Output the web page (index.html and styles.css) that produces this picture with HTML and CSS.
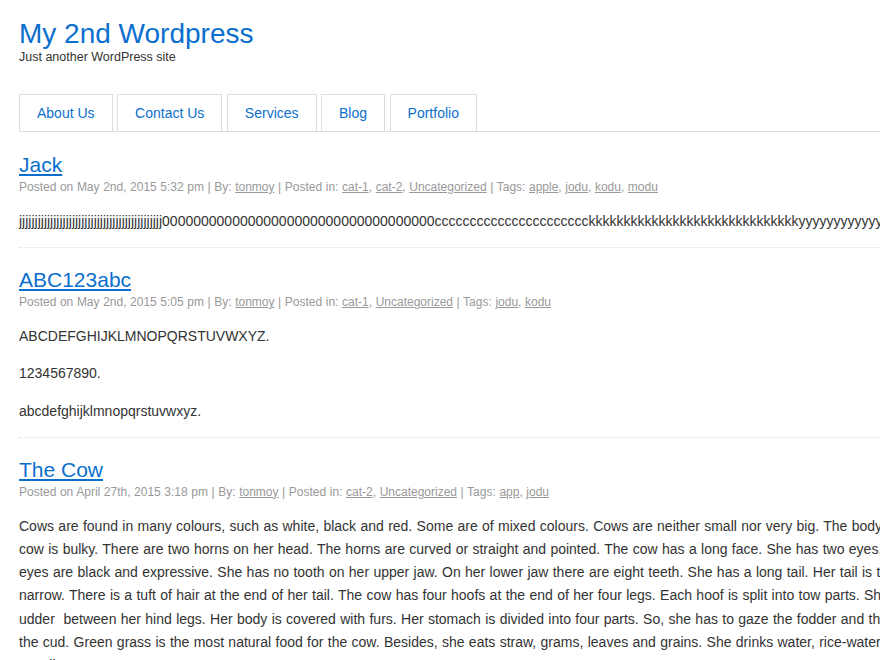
FILE: index.html
```html
<!DOCTYPE html>
<html lang="en">
<head>
<meta charset="utf-8">
<title>My 2nd Wordpress</title>
<link rel="stylesheet" href="styles.css">
</head>
<body>
<div class="site">
  <header class="site-header">
    <h1 class="site-title"><a href="#">My 2nd Wordpress</a></h1>
    <p class="site-description">Just another WordPress site</p>
  </header>
  <nav class="main-nav">
    <ul class="menu">
      <li><a href="#">About Us</a></li>
      <li><a href="#">Contact Us</a></li>
      <li><a href="#">Services</a></li>
      <li><a href="#">Blog</a></li>
      <li><a href="#">Portfolio</a></li>
    </ul>
  </nav>
  <main class="content">
    <article class="post">
      <h2 class="post-title"><a href="#">Jack</a></h2>
      <div class="post-meta">Posted on May 2nd, 2015 5:32 pm | By: <a href="#">tonmoy</a> | Posted in: <a href="#">cat-1</a>, <a href="#">cat-2</a>, <a href="#">Uncategorized</a> | Tags: <a href="#">apple</a>, <a href="#">jodu</a>, <a href="#">kodu</a>, <a href="#">modu</a></div>
      <div class="post-body">
        <p>jjjjjjjjjjjjjjjjjjjjjjjjjjjjjjjjjjjjjjjjjjjjjj00000000000000000000000000000000000cccccccccccccccccccccckkkkkkkkkkkkkkkkkkkkkkkkkkkkkkyyyyyyyyyyyyyyyyyyyyyyyyy</p>
      </div>
    </article>
    <article class="post">
      <h2 class="post-title"><a href="#">ABC123abc</a></h2>
      <div class="post-meta">Posted on May 2nd, 2015 5:05 pm | By: <a href="#">tonmoy</a> | Posted in: <a href="#">cat-1</a>, <a href="#">Uncategorized</a> | Tags: <a href="#">jodu</a>, <a href="#">kodu</a></div>
      <div class="post-body">
        <p>ABCDEFGHIJKLMNOPQRSTUVWXYZ.</p>
        <p>1234567890.</p>
        <p>abcdefghijklmnopqrstuvwxyz.</p>
      </div>
    </article>
    <article class="post">
      <h2 class="post-title"><a href="#">The Cow</a></h2>
      <div class="post-meta">Posted on April 27th, 2015 3:18 pm | By: <a href="#">tonmoy</a> | Posted in: <a href="#">cat-2</a>, <a href="#">Uncategorized</a> | Tags: <a href="#">app</a>, <a href="#">jodu</a></div>
      <div class="post-body">
        <p>Cows are found in many colours, such as white, black and red. Some are of mixed colours. Cows are neither small nor very big. The body of a cow is bulky. There are two horns on her head. The horns are curved or straight and pointed. The cow has a long face. She has two eyes. The eyes are black and expressive. She has no tooth on her upper jaw. On her lower jaw there are eight teeth. She has a long tail. Her tail is thin, narrow. There is a tuft of hair at the end of her tail. The cow has four hoofs at the end of her four legs. Each hoof is split into tow parts. She has udder&nbsp; between her hind legs. Her body is covered with furs. Her stomach is divided into four parts. So, she has to gaze the fodder and then eat the cud. Green grass is the most natural food for the cow. Besides, she eats straw, grams, leaves and grains. She drinks water, rice-water and usually more.</p>
      </div>
    </article>
  </main>
</div>
</body>
</html>
```

FILE: styles.css
```css
html, body {
  overflow-x: hidden;
}

body {
  margin: 0;
  background: #ffffff;
  color: #333333;
  font-family: "Liberation Sans", Arial, Helvetica, sans-serif;
}

a {
  color: #0b6fce;
}

.site {
  width: 906px;
  padding: 18px 0 0 19px;
}

.site-title {
  margin: 0;
  font-size: 28px;
  line-height: 32px;
  font-weight: normal;
}

.site-title a {
  text-decoration: none;
}

.site-description {
  margin: 0;
  font-size: 12.5px;
  line-height: 14px;
  color: #333333;
}

.main-nav {
  margin-top: 30px;
}

.menu {
  display: flex;
  gap: 4.5px;
  margin: 0;
  padding: 0;
  list-style: none;
  border-bottom: 1px solid #dddddd;
}

.menu a {
  display: block;
  padding: 10px 17px;
  border: 1px solid #dddddd;
  border-bottom: 0;
  font-size: 14px;
  line-height: 16px;
  text-decoration: none;
}

.content {
  padding-top: 19px;
}

.post {
  border-bottom: 1px dotted #dddddd;
}

.post + .post {
  padding-top: 18px;
}

.post-title {
  margin: 0;
  font-size: 21px;
  line-height: 27px;
  font-weight: normal;
}

.post-meta {
  font-size: 12px;
  line-height: 18px;
  word-spacing: 0.25px;
  color: #999999;
}

.post-meta a {
  color: #999999;
}

.post-body p {
  margin: 14px 0;
  font-size: 14px;
  line-height: 23.2px;
  word-spacing: 0.45px;
}
```
